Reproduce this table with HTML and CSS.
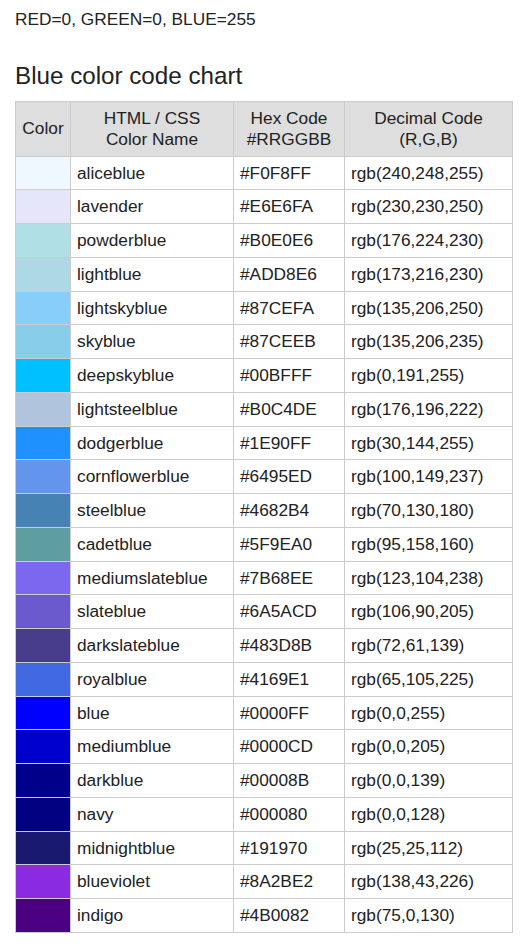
FILE: index.html
```html
<!DOCTYPE html>
<html>
<head>
<meta charset="utf-8">
<link rel="stylesheet" href="styles.css">
</head>
<body>
<p class="intro">RED=0, GREEN=0, BLUE=255</p>
<h2 class="title">Blue color code chart</h2>
<table class="chart">
<colgroup>
<col class="c-color"><col class="c-name"><col class="c-hex"><col class="c-dec">
</colgroup>
<thead>
<tr><th>Color</th><th>HTML / CSS<br>Color Name</th><th>Hex Code<br>#RRGGBB</th><th>Decimal Code<br>(R,G,B)</th></tr>
</thead>
<tbody>
<tr><td class="sw" style="background:#F0F8FF"></td><td>aliceblue</td><td>#F0F8FF</td><td>rgb(240,248,255)</td></tr>
<tr><td class="sw" style="background:#E6E6FA"></td><td>lavender</td><td>#E6E6FA</td><td>rgb(230,230,250)</td></tr>
<tr><td class="sw" style="background:#B0E0E6"></td><td>powderblue</td><td>#B0E0E6</td><td>rgb(176,224,230)</td></tr>
<tr><td class="sw" style="background:#ADD8E6"></td><td>lightblue</td><td>#ADD8E6</td><td>rgb(173,216,230)</td></tr>
<tr><td class="sw" style="background:#87CEFA"></td><td>lightskyblue</td><td>#87CEFA</td><td>rgb(135,206,250)</td></tr>
<tr><td class="sw" style="background:#87CEEB"></td><td>skyblue</td><td>#87CEEB</td><td>rgb(135,206,235)</td></tr>
<tr><td class="sw" style="background:#00BFFF"></td><td>deepskyblue</td><td>#00BFFF</td><td>rgb(0,191,255)</td></tr>
<tr><td class="sw" style="background:#B0C4DE"></td><td>lightsteelblue</td><td>#B0C4DE</td><td>rgb(176,196,222)</td></tr>
<tr><td class="sw" style="background:#1E90FF"></td><td>dodgerblue</td><td>#1E90FF</td><td>rgb(30,144,255)</td></tr>
<tr><td class="sw" style="background:#6495ED"></td><td>cornflowerblue</td><td>#6495ED</td><td>rgb(100,149,237)</td></tr>
<tr><td class="sw" style="background:#4682B4"></td><td>steelblue</td><td>#4682B4</td><td>rgb(70,130,180)</td></tr>
<tr><td class="sw" style="background:#5F9EA0"></td><td>cadetblue</td><td>#5F9EA0</td><td>rgb(95,158,160)</td></tr>
<tr><td class="sw" style="background:#7B68EE"></td><td>mediumslateblue</td><td>#7B68EE</td><td>rgb(123,104,238)</td></tr>
<tr><td class="sw" style="background:#6A5ACD"></td><td>slateblue</td><td>#6A5ACD</td><td>rgb(106,90,205)</td></tr>
<tr><td class="sw" style="background:#483D8B"></td><td>darkslateblue</td><td>#483D8B</td><td>rgb(72,61,139)</td></tr>
<tr><td class="sw" style="background:#4169E1"></td><td>royalblue</td><td>#4169E1</td><td>rgb(65,105,225)</td></tr>
<tr><td class="sw" style="background:#0000FF"></td><td>blue</td><td>#0000FF</td><td>rgb(0,0,255)</td></tr>
<tr><td class="sw" style="background:#0000CD"></td><td>mediumblue</td><td>#0000CD</td><td>rgb(0,0,205)</td></tr>
<tr><td class="sw" style="background:#00008B"></td><td>darkblue</td><td>#00008B</td><td>rgb(0,0,139)</td></tr>
<tr><td class="sw" style="background:#000080"></td><td>navy</td><td>#000080</td><td>rgb(0,0,128)</td></tr>
<tr><td class="sw" style="background:#191970"></td><td>midnightblue</td><td>#191970</td><td>rgb(25,25,112)</td></tr>
<tr><td class="sw" style="background:#8A2BE2"></td><td>blueviolet</td><td>#8A2BE2</td><td>rgb(138,43,226)</td></tr>
<tr><td class="sw" style="background:#4B0082"></td><td>indigo</td><td>#4B0082</td><td>rgb(75,0,130)</td></tr>
</tbody>
</table>
</body>
</html>
```

FILE: styles.css
```css
html, body {
  margin: 0;
  background: #fff;
}
body {
  padding: 9px 15px 0 15px;
  font-family: "Liberation Sans", Arial, sans-serif;
  font-size: 17.3px;
  color: #222;
}
.intro {
  margin: 0;
}
.title {
  margin: 32px 0 11px 0;
  font-size: 24.2px;
  font-weight: normal;
  line-height: normal;
}
.chart {
  border-collapse: collapse;
  width: 497px;
  table-layout: fixed;
  line-height: 1.2;
}
.chart th,
.chart td {
  border: 1px solid #cccccc;
  padding: 6px 6px;
  text-align: left;
  font-weight: normal;
}
.chart th {
  background: #dedede;
  text-align: center;
}
.c-color { width: 55px; }
.c-name { width: 163px; }
.c-hex { width: 111px; }
.c-dec { width: 168px; }
```
